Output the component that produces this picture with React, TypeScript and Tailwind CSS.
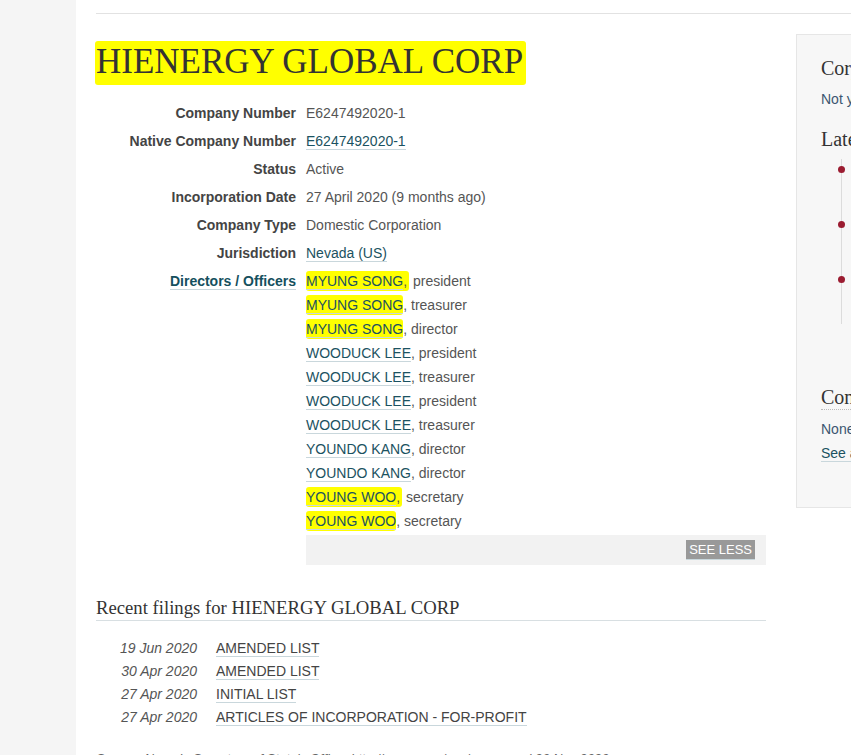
import React from 'react';

const sans = { fontFamily: '"Liberation Sans", Arial, sans-serif' };
const serif = { fontFamily: '"Liberation Serif", "Times New Roman", serif' };

const details: { label: string; value: React.ReactNode }[] = [
  { label: 'Company Number', value: 'E6247492020-1' },
  { label: 'Native Company Number', value: <a className="text-[#1b5261] border-b border-[#c9d7dc]">E6247492020-1</a> },
  { label: 'Status', value: 'Active' },
  { label: 'Incorporation Date', value: '27 April 2020 (9 months ago)' },
  { label: 'Company Type', value: 'Domestic Corporation' },
  { label: 'Jurisdiction', value: <a className="text-[#1b5261] border-b border-[#c9d7dc]">Nevada (US)</a> },
];

const officers = [
  { name: 'MYUNG SONG', role: 'president', hl: 'comma' },
  { name: 'MYUNG SONG', role: 'treasurer', hl: 'name' },
  { name: 'MYUNG SONG', role: 'director', hl: 'name' },
  { name: 'WOODUCK LEE', role: 'president' },
  { name: 'WOODUCK LEE', role: 'treasurer' },
  { name: 'WOODUCK LEE', role: 'president' },
  { name: 'WOODUCK LEE', role: 'treasurer' },
  { name: 'YOUNDO KANG', role: 'director' },
  { name: 'YOUNDO KANG', role: 'director' },
  { name: 'YOUNG WOO', role: 'secretary', hl: 'comma' },
  { name: 'YOUNG WOO', role: 'secretary', hl: 'name' },
];

const filings = [
  { date: '19 Jun 2020', title: 'AMENDED LIST' },
  { date: '30 Apr 2020', title: 'AMENDED LIST' },
  { date: '27 Apr 2020', title: 'INITIAL LIST' },
  { date: '27 Apr 2020', title: 'ARTICLES OF INCORPORATION - FOR-PROFIT' },
];

export default function App() {
  return (
    <div className="flex w-[851px] h-[755px] overflow-hidden bg-white text-[14px] text-[#555]" style={sans}>
      {/* left gutter */}
      <div className="w-[76px] shrink-0 bg-[#f5f5f5]" />

      <div className="flex-1 pl-[20px] min-w-0">
        <div className="mt-[13px] border-t border-[#e2e2e2] w-[1000px]" />

        <div className="flex">
          {/* main column */}
          <div className="w-[670px] shrink-0">
            <h1 className="mt-[30px] text-[35px] leading-[36px] text-[#333]" style={serif}>
              <span className="bg-[#ffff00] rounded-[3px] pb-[4px] pt-[1px] pr-[3px] -ml-[1px] pl-[1px]">HIENERGY GLOBAL CORP</span>
            </h1>

            <dl className="mt-[19px]">
              {details.map((d) => (
                <div key={d.label} className="grid grid-cols-[200px_1fr] gap-x-[10px] py-[4px] leading-[20px]">
                  <dt className="text-right font-bold text-[#444]">{d.label}</dt>
                  <dd>{d.value}</dd>
                </div>
              ))}
              <div className="grid grid-cols-[200px_1fr] gap-x-[10px] pt-[4px] leading-[20px]">
                <dt className="text-right font-bold">
                  <a className="text-[#15505e] border-b border-[#c9d7dc]">Directors / Officers</a>
                </dt>
                <dd>
                  <ul className="w-[460px]">
                    {officers.map((o, i) => (
                      <li key={i} className="mb-[4px]">
                        {o.hl === 'comma' ? (
                          <span className="bg-[#ffff00] rounded-[3px] py-[2px] pr-[2px]">
                            <a className="text-[#1b5261] border-b border-[#c9d7dc]">{o.name}</a>,
                          </span>
                        ) : o.hl === 'name' ? (
                          <span className="bg-[#ffff00] rounded-[3px] py-[2px]">
                            <a className="text-[#1b5261] border-b border-[#c9d7dc]">{o.name}</a>
                          </span>
                        ) : (
                          <a className="text-[#1b5261] border-b border-[#c9d7dc]">{o.name}</a>
                        )}
                        {o.hl === 'comma' ? ' ' : ', '}
                        {o.role}
                      </li>
                    ))}
                  </ul>
                  <div className="w-[460px] h-[30px] bg-[#f2f2f2] flex justify-end items-start pt-[5px] pr-[11px]">
                    <button className="bg-[#999] text-white text-[13px] leading-[19px] px-[3px] border-b border-[#c9d7dc]">
                      SEE LESS
                    </button>
                  </div>
                </dd>
              </div>
            </dl>

            <h2 className="mt-[31px] text-[18.7px] leading-[24px] text-[#333] border-b border-[#d8dfe2]" style={serif}>
              Recent filings for HIENERGY GLOBAL CORP
            </h2>
            <ul className="mt-[16px]">
              {filings.map((f, i) => (
                <li key={i} className="grid grid-cols-[101px_1fr] gap-x-[19px] leading-[23px]">
                  <span className="text-right italic">{f.date}</span>
                  <span>
                    <a className="text-[#444] border-b border-[#c9d7dc]">{f.title}</a>
                  </span>
                </li>
              ))}
            </ul>

            <p className="mt-[21px] text-[13px] leading-[18px] text-[#666] italic">
              Source: Nevada Secretary of State's Office, http://nvsos.gov/sos/, accessed 20 Nov 2020
            </p>
          </div>

          {/* sidebar */}
          <aside className="ml-[30px] mt-[20px] w-[300px] shrink-0 h-[474px] bg-[#f7f7f7] border border-[#e6e6e6] pl-[24px] pr-[20px] pt-[21px]">
            <h3 className="text-[20px] leading-[24px] text-[#333]" style={serif}>Corporate grouping</h3>
            <p className="mt-[9px] leading-[20px] text-[#3b5670]">Not yet added</p>
            <h3 className="mt-[18px] text-[20px] leading-[24px] text-[#333]" style={serif}>Latest events</h3>
            <ul className="mt-[8px] ml-[20px] border-l border-[#dcdcdc]">
              {['Amended list filed', 'Amended list filed', 'Incorporated'].map((e, i) => (
                <li key={i} className="relative h-[55px] pl-[14px] pt-[1px] leading-[20px] text-[13px]">
                  <span className="absolute -left-[4px] top-[7px] w-[7px] h-[7px] rounded-full bg-[#9b1c31]" />
                  {e}
                </li>
              ))}
            </ul>
            <h3 className="mt-[61px] text-[20px] leading-[24px] text-[#333] border-b border-dotted border-[#bbb]" style={serif}>
              Control statements
            </h3>
            <p className="mt-[9px] leading-[20px] text-[#3b5670]">None</p>
            <p className="mt-[4px] leading-[20px]">
              <a className="text-[#1b5261] border-b border-[#c9d7dc]">See all control statements</a>
            </p>
          </aside>
        </div>
      </div>
    </div>
  );
}
